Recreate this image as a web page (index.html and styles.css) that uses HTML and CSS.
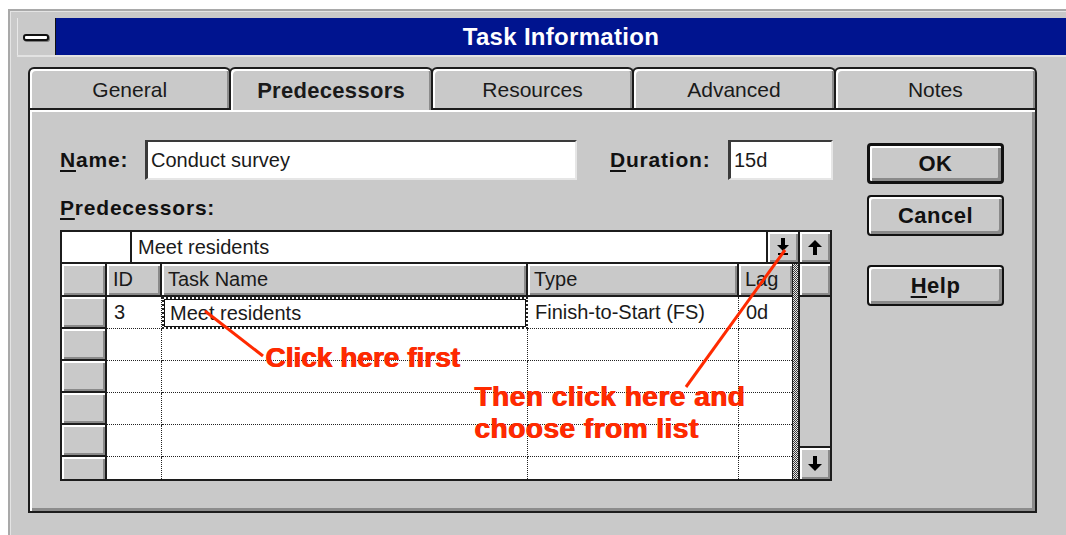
FILE: index.html
```html
<!DOCTYPE html>
<html>
<head>
<meta charset="utf-8">
<title>Task Information</title>
<link rel="stylesheet" href="styles.css">
</head>
<body>
<div class="screen">
  <div class="window">
    <div class="titlebar">
      <div class="sysmenu"><span class="sysmenu-bar"></span></div>
      <div class="caption">Task Information</div>
    </div>
    <div class="dialog">
      <div class="tabs">
        <div class="tab">General</div>
        <div class="tab tab-active">Predecessors</div>
        <div class="tab">Resources</div>
        <div class="tab">Advanced</div>
        <div class="tab">Notes</div>
      </div>
      <div class="panel">
        <div class="form">
          <div class="field-row">
            <span class="label name-label"><u>N</u>ame:</span>
            <div class="input name-input">Conduct survey</div>
            <span class="label dur-label"><u>D</u>uration:</span>
            <div class="input dur-input">15d</div>
          </div>
          <div class="label pred-label"><u>P</u>redecessors:</div>
          <div class="grid">
            <div class="grid-main">
              <div class="entry-row">
                <div class="entry-blank"></div>
                <div class="entry-field">Meet residents</div>
                <div class="btn3d drop-btn">
                  <svg width="12" height="17" viewBox="0 0 12 17"><rect x="4" y="0" width="4" height="7" fill="#000"/><polygon points="0,7 12,7 6,13" fill="#000"/><rect x="1" y="15" width="10" height="2" fill="#000"/></svg>
                </div>
              </div>
              <div class="table-wrap">
                <div class="table">
                  <div class="rh rh-corner"></div>
                  <div class="th">ID</div>
                  <div class="th">Task Name</div>
                  <div class="th">Type</div>
                  <div class="th th-last">Lag</div>

                  <div class="rh"></div>
                  <div class="td">3</div>
                  <div class="td td-current">Meet residents</div>
                  <div class="td">Finish-to-Start (FS)</div>
                  <div class="td td-last">0d</div>

                  <div class="rh"></div><div class="td"></div><div class="td"></div><div class="td"></div><div class="td td-last"></div>
                  <div class="rh"></div><div class="td"></div><div class="td"></div><div class="td"></div><div class="td td-last"></div>
                  <div class="rh"></div><div class="td"></div><div class="td"></div><div class="td"></div><div class="td td-last"></div>
                  <div class="rh"></div><div class="td"></div><div class="td"></div><div class="td"></div><div class="td td-last"></div>
                  <div class="rh"></div><div class="td"></div><div class="td"></div><div class="td"></div><div class="td td-last"></div>
                </div>
                <div class="splitter"></div>
              </div>
            </div>
            <div class="vscroll">
              <div class="btn3d scroll-up">
                <svg width="14" height="15" viewBox="0 0 14 15"><polygon points="7,0 14,7 0,7" fill="#000"/><rect x="5" y="7" width="4" height="8" fill="#000"/></svg>
              </div>
              <div class="btn3d scroll-thumb"></div>
              <div class="scroll-track"></div>
              <div class="btn3d scroll-down">
                <svg width="14" height="15" viewBox="0 0 14 15"><rect x="5" y="0" width="4" height="8" fill="#000"/><polygon points="0,8 14,8 7,15" fill="#000"/></svg>
              </div>
            </div>
          </div>
        </div>
        <div class="actions">
          <div class="cmd cmd-default">OK</div>
          <div class="cmd">Cancel</div>
          <div class="cmd cmd-help"><u>H</u>elp</div>
        </div>
      </div>
    </div>
  </div>

  <div class="notes">
    <svg class="note-lines" width="1066" height="535" viewBox="0 0 1066 535">
      <line x1="205" y1="311" x2="263" y2="356" stroke="#ff2a00" stroke-width="3"/>
      <line x1="686" y1="387" x2="785" y2="250" stroke="#ff2a00" stroke-width="3"/>
    </svg>
    <div class="note note-first">Click here first</div>
    <div class="note note-then">Then click here and<br>choose from list</div>
  </div>
</div>
</body>
</html>
```

FILE: styles.css
```css
* {
  box-sizing: border-box;
}

body {
  margin: 0;
  background: #ffffff;
  font-family: "Liberation Sans", Arial, sans-serif;
  color: #111;
}

.screen {
  position: relative;
  width: 1066px;
  height: 535px;
  overflow: hidden;
  padding: 9px 0 0 8px;
  background: #ffffff;
}

/* window frame */
.window {
  width: 1060px;
  height: 530px;
  background: #c9c9c9;
  border-top: 2px solid #a9a9a9;
  border-left: 2px solid #a9a9a9;
  box-shadow: inset 1px 1px 0 #e4e4e4;
  padding: 7px 0 0 7px;
}

.titlebar {
  display: flex;
  height: 39px;
  border-bottom: 2px solid #e2e2e2;
}

.sysmenu {
  width: 39px;
  display: flex;
  align-items: center;
  justify-content: center;
  background: #c9c9c9;
  border-right: 1px solid #111;
  box-shadow: inset 1px 0 0 #e8e8e8;
  padding-top: 1px;
}

.sysmenu-bar {
  display: block;
  width: 26px;
  height: 7px;
  border: 2px solid #111;
  border-radius: 3px;
  background: #fff;
  box-shadow: 1px 1px 0 #7a7a7a;
}

.caption {
  flex: 1;
  background: #00148f;
  color: #fff;
  font-weight: bold;
  font-size: 24px;
  line-height: 37px;
  text-align: center;
  letter-spacing: 0.3px;
  border-right: 2px solid #e2e2e2;
}

/* tabbed dialog */
.dialog {
  padding: 10px 0 0 11px;
}

.tabs {
  display: flex;
  width: 1009px;
  height: 41px;
  position: relative;
  z-index: 1;
}

.tab {
  flex: 1;
  height: 41px;
  border: 2px solid #1c1c1c;
  border-bottom: none;
  border-radius: 6px 6px 0 0;
  box-shadow: inset 2px 2px 0 #fff, inset -2px 0 0 #8c8c8c;
  margin-right: -2px;
  display: flex;
  align-items: center;
  justify-content: center;
  font-size: 21px;
  color: #1a1a1a;
  padding-top: 2px;
}

.tab:last-child {
  margin-right: 0;
}

.tab-active {
  font-weight: bold;
  font-size: 22px;
  letter-spacing: 0.3px;
  height: 43px;
  background: #c9c9c9;
  position: relative;
  z-index: 2;
  box-shadow: inset 2px 2px 0 #fff, inset -2px 0 0 #8c8c8c;
}

.panel {
  width: 1009px;
  height: 405px;
  border: 2px solid #1c1c1c;
  box-shadow: inset 2px 2px 0 #fff, inset -3px -3px 0 #8c8c8c;
  padding: 30px 0 0 30px;
  display: flex;
  gap: 34px;
}

.form {
  width: 773px;
}

.field-row {
  display: flex;
  align-items: center;
  height: 40px;
}

.label {
  font-weight: bold;
  font-size: 21px;
  letter-spacing: 0.8px;
  color: #111;
}

.label u {
  text-decoration-thickness: 2px;
  text-underline-offset: 3px;
}

.name-label {
  width: 85px;
}

.input {
  height: 40px;
  background: #fff;
  border-style: solid;
  border-width: 2px 2px 2px 3px;
  border-color: #3a3a3a #e6e6e6 #e6e6e6 #3a3a3a;
  font-size: 20px;
  line-height: 36px;
  padding-left: 3px;
  color: #1a1a1a;
}

.name-input {
  width: 432px;
}

.dur-label {
  margin-left: 33px;
  width: 118px;
}

.dur-input {
  width: 105px;
}

.pred-label {
  margin-top: 14px;
  line-height: 28px;
  margin-bottom: 8px;
}

/* predecessor grid */
.grid {
  display: flex;
  width: 772px;
  height: 251px;
  border: 2px solid #1c1c1c;
}

.grid-main {
  width: 736px;
  display: flex;
  flex-direction: column;
}

.entry-row {
  display: flex;
  height: 32px;
  border-bottom: 2px solid #1c1c1c;
  background: #fff;
}

.entry-blank {
  width: 70px;
  border-right: 2px solid #1c1c1c;
}

.entry-field {
  flex: 1;
  font-size: 20px;
  line-height: 30px;
  padding-left: 6px;
  color: #1a1a1a;
}

.btn3d {
  background: #c9c9c9;
  box-shadow: inset 2px 2px 0 #fff, inset -2px -2px 0 #8a8a8a;
  display: flex;
  align-items: center;
  justify-content: center;
}

.drop-btn {
  width: 32px;
  border-left: 2px solid #1c1c1c;
  padding-bottom: 2px;
}

.table-wrap {
  display: flex;
  height: 215px;
}

.table {
  display: grid;
  grid-template-columns: 45px 55px 366px 211px 53px;
  grid-template-rows: 33px;
  grid-auto-rows: 32px;
  width: 730px;
  height: 215px;
  overflow: hidden;
  background: #fff;
}

.rh {
  background: #c9c9c9;
  border-right: 2px solid #1c1c1c;
  border-bottom: 2px solid #1c1c1c;
  box-shadow: inset 2px 2px 0 #fff, inset -2px -2px 0 #8a8a8a;
}

.th {
  background: #c9c9c9;
  border-right: 2px solid #1c1c1c;
  border-bottom: 2px solid #1c1c1c;
  box-shadow: inset 2px 2px 0 #fff, inset -2px -2px 0 #8a8a8a;
  font-size: 20px;
  line-height: 31px;
  padding-left: 6px;
  color: #1a1a1a;
}

.th-last {
  border-right: none;
}

.td {
  border-right: 1px dotted #222;
  border-bottom: 1px dotted #222;
  font-size: 20px;
  line-height: 30px;
  padding-left: 7px;
  color: #1a1a1a;
}

.td-last {
  border-right: none;
}

.td-current {
  border: 2px dotted #222;
  box-shadow: inset 0 0 0 1px #111;
  padding-left: 6px;
  line-height: 28px;
}

.splitter {
  width: 6px;
  border-left: 1px solid #1c1c1c;
  background: repeating-conic-gradient(#3a3a3a 0 25%, #e6e6e6 0 50%) 0 0 / 2px 2px;
}

.vscroll {
  width: 32px;
  border-left: 2px solid #1c1c1c;
  display: flex;
  flex-direction: column;
  background: #c9c9c9;
}

.scroll-up {
  height: 32px;
  border-bottom: 2px solid #1c1c1c;
}

.scroll-thumb {
  height: 33px;
  border-bottom: 2px solid #1c1c1c;
}

.scroll-track {
  flex: 1;
  background: #c9c9c9;
}

.scroll-down {
  height: 33px;
  border-top: 2px solid #1c1c1c;
}

/* command buttons */
.actions {
  display: flex;
  flex-direction: column;
  padding-top: 3px;
}

.cmd {
  width: 137px;
  height: 41px;
  border: 2px solid #111;
  border-radius: 4px;
  background: #c9c9c9;
  box-shadow: inset 2px 2px 0 #fff, inset -3px -3px 0 #8a8a8a;
  display: flex;
  align-items: center;
  justify-content: center;
  font-weight: bold;
  font-size: 22px;
  letter-spacing: 0.5px;
  color: #111;
  margin-bottom: 11px;
}

.cmd-default {
  border-width: 3px;
}

.cmd-help {
  margin-top: 18px;
}

.cmd u {
  text-decoration-thickness: 2px;
  text-underline-offset: 3px;
}

/* red call-outs drawn over the dialog */
.notes {
  position: absolute;
  left: 0;
  top: 0;
  width: 1066px;
  height: 535px;
  pointer-events: none;
}

.note-lines {
  position: absolute;
  left: 0;
  top: 0;
}

.note {
  position: absolute;
  color: #ff2a00;
  font-weight: bold;
  font-size: 28px;
  line-height: 32px;
  text-shadow: 1px 0 0 #e82400;
}

.note-first {
  left: 265px;
  top: 342px;
}

.note-then {
  left: 474px;
  top: 381px;
  letter-spacing: 0.5px;
}
```
